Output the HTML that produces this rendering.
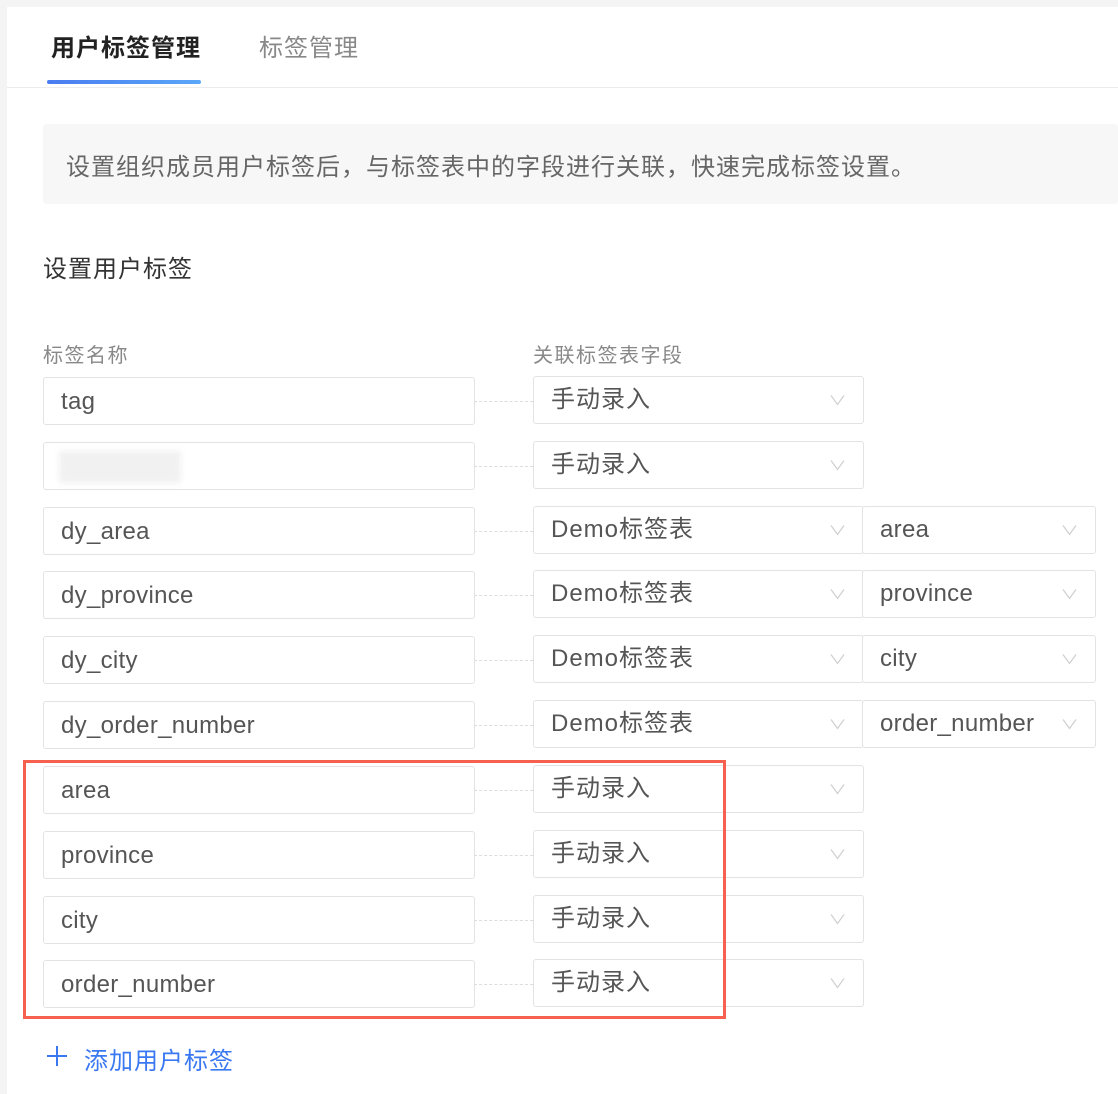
<!DOCTYPE html>
<html><head><meta charset="utf-8"><style>
*{box-sizing:border-box;margin:0;padding:0}
body{width:1118px;height:1094px;background:#f4f4f4;font-family:"Liberation Sans","Noto Sans CJK SC",sans-serif;position:relative;overflow:hidden}
.card{position:absolute;left:7px;top:7px;width:1111px;height:1087px;background:#fff}
.a{position:absolute}
.tab{font-size:24px;top:28px;letter-spacing:1px}
.box{position:absolute;border:1px solid #e3e3e3;border-radius:3px;height:48px;background:#fff;font-size:24px;letter-spacing:0.3px;color:#555;line-height:48px;padding-left:17px}
.cj{letter-spacing:1px;line-height:46px}
.chev{position:absolute;right:18px;top:17px;width:15px;height:12px}
.dash{position:absolute;left:474px;width:59px;border-top:1px dashed #ddd}
</style></head><body>
<div class="card"></div>
<div class="a tab" style="left:51px;font-weight:bold;color:#222">用户标签管理</div>
<div class="a tab" style="left:259px;color:#888">标签管理</div>
<div class="a" style="left:47px;top:80px;width:154px;height:4px;border-radius:2px;background:linear-gradient(90deg,#4a7cf0,#5aa7f8)"></div>
<div class="a" style="left:7px;top:87px;width:1111px;height:1px;background:#ececec"></div>
<div class="a" style="left:43px;top:124px;width:1075px;height:80px;background:#f7f7f7;border-radius:3px"></div>
<div class="a" style="left:66px;top:147px;font-size:24px;letter-spacing:1px;color:#666">设置组织成员用户标签后，与标签表中的字段进行关联，快速完成标签设置。</div>
<div class="a" style="left:43px;top:249px;font-size:24px;letter-spacing:1px;color:#333">设置用户标签</div>
<div class="a" style="left:43px;top:339px;font-size:20px;letter-spacing:1.5px;color:#888">标签名称</div>
<div class="a" style="left:533px;top:339px;font-size:20px;letter-spacing:1.5px;color:#888">关联标签表字段</div>
<div id="rows"></div>
<div class="a" style="left:23px;top:760px;width:703px;height:259px;border:3px solid #f5604f"></div>
<svg class="a" style="left:46px;top:1045px" width="22" height="22" viewBox="0 0 22 22"><path d="M11 1V21M1 11H21" stroke="#3a78f2" stroke-width="2"/></svg>
<div class="a" style="left:84px;top:1041px;font-size:24px;letter-spacing:1px;color:#3a78f2">添加用户标签</div>
<script>
var rows=[["tag","手动录入"],["","手动录入"],["dy_area","Demo标签表","area"],["dy_province","Demo标签表","province"],["dy_city","Demo标签表","city"],["dy_order_number","Demo标签表","order_number"],["area","手动录入"],["province","手动录入"],["city","手动录入"],["order_number","手动录入"]];
var tops=[377,442,507,571,636,701,766,831,896,960],h="";
var chev='<svg class="chev" viewBox="0 0 15 12"><path d="M1 1.5 L7.5 10.5 L14 1.5" fill="none" stroke="#cfcfcf" stroke-width="1.2"/></svg>';
rows.forEach(function(r,i){var t=tops[i];
h+='<div class="box" style="left:43px;top:'+t+'px;width:432px">'+r[0]+(i==1?'<div class="a" style="left:15px;top:8px;width:122px;height:32px;background:#f1f1f1;filter:blur(3px)"></div>':'')+'</div>';
h+='<div class="dash" style="top:'+(t+24)+'px"></div>';
h+='<div class="box cj" style="left:533px;top:'+(t-1)+'px;width:331px">'+r[1]+chev+'</div>';
if(r[2])h+='<div class="box" style="left:862px;top:'+(t-1)+'px;width:234px;line-height:46px">'+r[2]+chev+'</div>';});
document.getElementById('rows').innerHTML=h;
</script>
</body></html>
